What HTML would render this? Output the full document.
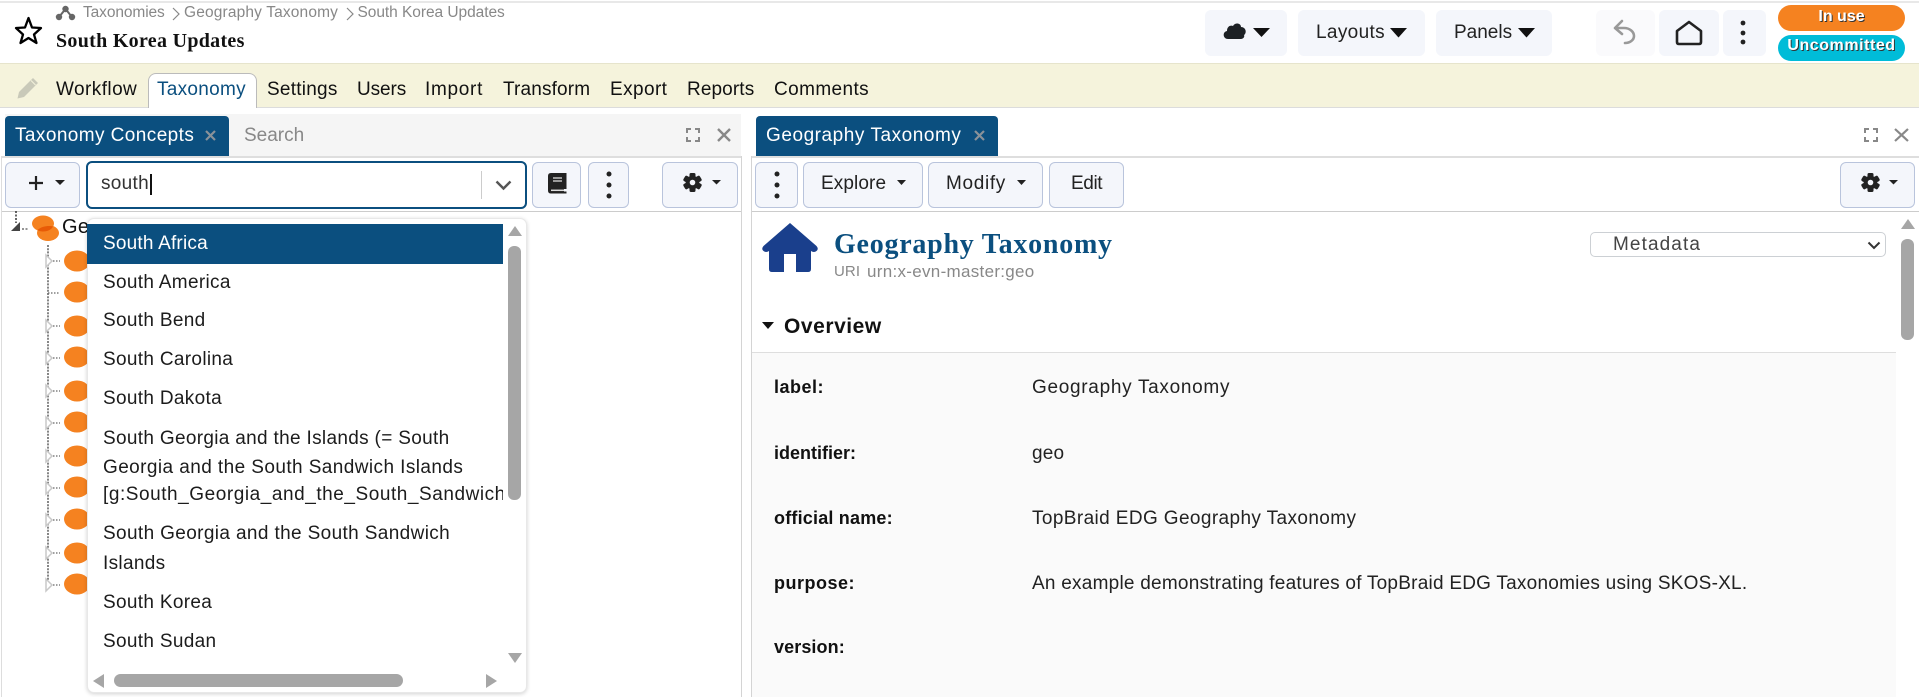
<!DOCTYPE html>
<html lang="en">
<head>
<meta charset="utf-8">
<title>South Korea Updates</title>
<style>
html,body{margin:0;padding:0;background:#fff;}
body{width:1919px;height:697px;overflow:hidden;position:relative;font-family:"Liberation Sans",sans-serif;color:#111;}
.a{position:absolute;box-sizing:border-box;}
.t{position:absolute;white-space:nowrap;line-height:24px;height:24px;font-size:19px;letter-spacing:.2px;margin-top:1px;}
.n{margin-top:0;}
.btn{position:absolute;box-sizing:border-box;background:#f4f6fb;border:1px solid #b9c4dc;border-radius:6px;}
.hb{position:absolute;background:#f4f6fb;border-radius:6px;}
.b{font-weight:bold;font-size:18px;color:#111;margin-top:0;}
.dd{font-size:19px;letter-spacing:.32px;color:#1c1c1c;}
svg{position:absolute;overflow:visible;}
</style>
</head>
<body>
<!-- header -->
<div class="a" style="left:0;top:1px;width:1919px;height:2px;background:#e8e8e8"></div>
<svg style="left:0;top:0" width="80" height="60"><path d="M28.5 18 L32 27.5 L41 28 L34 34.5 L36.5 43 L28.5 38 L20.5 43 L23 34.5 L16 28 L25 27.5 Z" fill="none" stroke="#000" stroke-width="2.3" stroke-linejoin="round"/><g fill="#666"><circle cx="65.5" cy="9" r="3.2"/><circle cx="59" cy="17" r="3.2"/><circle cx="72" cy="17" r="3.2"/><path d="M65.5 9 L59 17 M65.5 9 L72 17" stroke="#666" stroke-width="2"/></g></svg>
<div class="t n" style="left:83px;top:1px;font-size:15.5px;letter-spacing:-.1px;color:#888">Taxonomies</div>
<svg style="left:171px;top:7px" width="10" height="14"><path d="M2 1 L8 7 L2 13" fill="none" stroke="#888" stroke-width="1.2"/></svg>
<div class="t n" style="left:184px;top:1px;font-size:15.5px;letter-spacing:.15px;color:#888">Geography Taxonomy</div>
<svg style="left:346px;top:7px" width="10" height="14"><path d="M1 1 L7 7 L1 13" fill="none" stroke="#888" stroke-width="1.2"/></svg>
<div class="t n" style="left:357.5px;top:1px;font-size:15.5px;letter-spacing:-.05px;color:#888">South Korea Updates</div>
<div class="t n" style="left:56px;top:29px;font-family:'Liberation Serif',serif;font-weight:bold;font-size:20px;letter-spacing:.3px;color:#111">South Korea Updates</div>

<div class="hb" style="left:1205px;top:10px;width:82px;height:46px"></div>
<svg style="left:1222px;top:22px" width="50" height="18"><path d="M6 17 C1 17 0 10 5 9 C5 4 9 3 11 4 C13 0 19 1 19 5 C24 5 25 11 22 13 C23 15 21 17 19 17 Z" fill="#1c2024"/><path d="M31 6 H48 L39.5 15 Z" fill="#111"/></svg>
<div class="hb" style="left:1298px;top:10px;width:127px;height:46px"></div>
<div class="t" style="left:1316px;top:20px;letter-spacing:.35px;color:#222">Layouts</div>
<svg style="left:1390px;top:28px" width="17" height="10"><path d="M0 0 H17 L8.5 9.5 Z" fill="#111"/></svg>
<div class="hb" style="left:1436px;top:10px;width:116px;height:46px"></div>
<div class="t" style="left:1454px;top:20px;letter-spacing:0;color:#222">Panels</div>
<svg style="left:1518px;top:28px" width="17" height="10"><path d="M0 0 H17 L8.5 9.5 Z" fill="#111"/></svg>

<div class="hb" style="left:1596px;top:10px;width:59px;height:46px;background:#fafafc"></div>
<svg style="left:1612px;top:18px" width="26" height="28"><path d="M10 3 L3 10 L10 16 M3 10 H12 C18 10 22 14 22 18 C22 22 18 25 13 25" fill="none" stroke="#999" stroke-width="2.6" stroke-linecap="round" stroke-linejoin="round"/></svg>
<div class="hb" style="left:1659px;top:10px;width:60px;height:46px"></div>
<svg style="left:1674px;top:19px" width="30" height="27"><path d="M3 12 L15 3 L27 12 V23 Q27 25 25 25 H5 Q3 25 3 23 Z" fill="none" stroke="#222" stroke-width="2.6" stroke-linejoin="round"/></svg>
<div class="hb" style="left:1723px;top:10px;width:43px;height:46px"></div>
<svg style="left:1738px;top:18px" width="10" height="30"><circle cx="5" cy="5" r="2.4" fill="#222"/><circle cx="5" cy="15" r="2.4" fill="#222"/><circle cx="5" cy="24" r="2.4" fill="#222"/></svg>

<div class="a" style="left:1778px;top:5px;width:127px;height:26px;border-radius:13px;background:#f58220"></div>
<div class="t n" style="left:1778px;width:127px;top:5px;text-align:center;font-weight:bold;font-size:16px;letter-spacing:0;color:#fff;text-shadow:1px 1px 0 #333">In use</div>
<div class="a" style="left:1778px;top:35px;width:127px;height:26px;border-radius:13px;background:#00bcd8"></div>
<div class="t n" style="left:1778px;width:127px;top:34px;text-align:center;font-weight:bold;font-size:16px;letter-spacing:.55px;color:#fff;text-shadow:1px 1px 0 #333">Uncommitted</div>

<!-- menu bar -->
<div class="a" style="left:0;top:63px;width:1919px;height:45px;background:#f5f3dc;border-top:1px solid #e6e4cc;border-bottom:1px solid #dcdcdc"></div>
<svg style="left:16px;top:76px" width="24" height="24"><path d="M17 2 L22 7 L8 21 L1.500 22.500 L3 16 Z" fill="#c9c9b9"/><path d="M15 4.500 L19.500 9" stroke="#f5f3dc" stroke-width="1"/></svg>
<div class="a" style="left:148px;top:73px;width:109px;height:35px;background:#fff;border:1px solid #bbb;border-bottom:none;border-radius:8px 8px 0 0"></div>
<div class="t" style="left:56px;top:77px;letter-spacing:.43px">Workflow</div>
<div class="t" style="left:157px;top:77px;letter-spacing:.29px;color:#0b4f7f">Taxonomy</div>
<div class="t" style="left:267px;top:77px;letter-spacing:.24px">Settings</div>
<div class="t" style="left:357px;top:77px;letter-spacing:-.1px">Users</div>
<div class="t" style="left:425px;top:77px;letter-spacing:.7px">Import</div>
<div class="t" style="left:503px;top:77px;letter-spacing:.15px">Transform</div>
<div class="t" style="left:610px;top:77px;letter-spacing:.41px">Export</div>
<div class="t" style="left:687px;top:77px;letter-spacing:.11px">Reports</div>
<div class="t" style="left:774px;top:77px;letter-spacing:.4px">Comments</div>

<!-- left panel -->
<div class="a" style="left:5px;top:114px;width:736px;height:42px;background:#f5f5f5"></div>
<div class="a" style="left:5px;top:116px;width:224px;height:40px;background:#0b4f7f;border-radius:4px 4px 0 0"></div>
<div class="t" style="left:15px;top:123px;letter-spacing:.42px;color:#fff">Taxonomy Concepts</div>
<svg style="left:204px;top:129px" width="13" height="13"><path d="M2 2 L11 11 M11 2 L2 11" stroke="#8a9299" stroke-width="2.2"/></svg>
<div class="t" style="left:244px;top:123px;letter-spacing:0;color:#888">Search</div>
<svg style="left:686px;top:128px" width="14" height="14"><path d="M1 5 V1 H5 M9 1 H13 V5 M13 9 V13 H9 M5 13 H1 V9" fill="none" stroke="#888" stroke-width="2"/></svg>
<svg style="left:717px;top:128px" width="14" height="14"><path d="M1 1 L13 13 M13 1 L1 13" stroke="#888" stroke-width="2.4"/></svg>
<div class="a" style="left:1px;top:156px;width:741px;height:2px;background:#dedede"></div>
<div class="a" style="left:1px;top:211px;width:741px;height:1px;background:#ccc"></div>
<div class="a" style="left:1px;top:156px;width:1px;height:541px;background:#ddd"></div>
<div class="a" style="left:741px;top:156px;width:1px;height:541px;background:#d4d4d4"></div>

<div class="btn" style="left:5px;top:162px;width:75px;height:46px"></div>
<svg style="left:28px;top:175px" width="38" height="16"><path d="M8 1 V15 M1 8 H15" stroke="#222" stroke-width="2.2"/><path d="M27 5 H37 L32 10 Z" fill="#222"/></svg>
<div class="a" style="left:86px;top:161px;width:441px;height:48px;background:#fff;border:2px solid #0b4f7f;border-radius:6px"></div>
<div class="t" style="left:101px;top:171px;letter-spacing:.3px;color:#333">south</div>
<div class="a" style="left:150px;top:174px;width:1.5px;height:21px;background:#111"></div>
<div class="a" style="left:481px;top:171px;width:1px;height:28px;background:#ccc"></div>
<svg style="left:495px;top:180px" width="17" height="11"><path d="M1.5 1.5 L8.5 8.5 L15.5 1.5" fill="none" stroke="#555" stroke-width="2.4"/></svg>
<div class="btn" style="left:532px;top:162px;width:49px;height:46px"></div>
<svg style="left:548px;top:173px" width="19" height="21"><path d="M3 0 H18.500 V16 H16 V18.500 H18.500 V20.500 H3 Q0 20.500 0 17.500 V3 Q0 0 3 0 Z" fill="#222"/><path d="M5 5 H14 M5 8 H14" stroke="#e2e2e2" stroke-width="1.3"/><path d="M3 17.300 H16" stroke="#ddd" stroke-width="1.500"/></svg>
<div class="btn" style="left:588px;top:162px;width:41px;height:46px"></div>
<svg style="left:604px;top:169px" width="10" height="32"><circle cx="5" cy="5" r="2.5" fill="#222"/><circle cx="5" cy="16" r="2.5" fill="#222"/><circle cx="5" cy="27" r="2.5" fill="#222"/></svg>
<div class="btn" style="left:662px;top:162px;width:76px;height:46px"></div>
<svg style="left:683px;top:173px" width="40" height="20"><g transform="translate(9.5,9.5)"><g fill="#222"><rect x="-3" y="-9.5" width="6" height="19" rx="1.5"/><rect x="-3" y="-9.5" width="6" height="19" rx="1.5" transform="rotate(60)"/><rect x="-3" y="-9.5" width="6" height="19" rx="1.5" transform="rotate(120)"/><circle r="6.8"/></g><circle r="2.8" fill="#f4f6fb"/></g><path d="M29 7 H38 L33.5 11.5 Z" fill="#222"/></svg>

<!-- tree -->
<svg style="left:0;top:205px" width="100" height="400">
<path d="M16 6 V18" stroke="#333" stroke-width="1.5" stroke-dasharray="2 1.5"/>
<path d="M11 26 L20 17 V26 Z" fill="#444"/>
<path d="M22 24 H29" stroke="#555" stroke-width="1.3" stroke-dasharray="2 1.5"/>
<ellipse cx="43" cy="18.5" rx="11" ry="8" fill="#f58220"/>
<ellipse cx="48" cy="28" rx="11" ry="8" fill="#f58220"/>
<path d="M37.5 25 C42 21 49 20.5 53 21.5 C52 24 48 26.5 43 26.5 C41 26.5 38.5 26 37.5 25 Z" fill="#e85a06"/>
<path d="M48 40 V376" stroke="#444" stroke-width="1.3" stroke-dasharray="2 1.2"/>
<g fill="#f58220"><ellipse cx="77" cy="56" rx="13" ry="10.5"/><ellipse cx="77" cy="87" rx="13" ry="10.5"/><ellipse cx="77" cy="121" rx="13" ry="10.5"/><ellipse cx="77" cy="152" rx="13" ry="10.5"/><ellipse cx="77" cy="186" rx="13" ry="10.5"/><ellipse cx="77" cy="217" rx="13" ry="10.5"/><ellipse cx="77" cy="251" rx="13" ry="10.5"/><ellipse cx="77" cy="282" rx="13" ry="10.5"/><ellipse cx="77" cy="314" rx="13" ry="10.5"/><ellipse cx="77" cy="348" rx="13" ry="10.5"/><ellipse cx="77" cy="379" rx="13" ry="10.5"/></g>
<g fill="#fff" stroke="#c8c8c8" stroke-width="1.500"><path d="M46 50 L52 56 L46 62 Z"/><path d="M46 115 L52 121 L46 127 Z"/><path d="M46 147 L52 153 L46 159 Z"/><path d="M46 180 L52 186 L46 192 Z"/><path d="M46 212 L52 218 L46 224 Z"/><path d="M46 245 L52 251 L46 257 Z"/><path d="M46 277 L52 283 L46 289 Z"/><path d="M46 309 L52 315 L46 321 Z"/><path d="M46 342 L52 348 L46 354 Z"/><path d="M46 374 L52 380 L46 386 Z"/></g>
<g stroke="#666" stroke-width="1.2" stroke-dasharray="1.5 1.5"><path d="M53 56 H60M48 88 H60M53 121 H60M53 153 H60M53 186 H60M53 218 H60M53 251 H60M53 283 H60M53 315 H60M53 348 H60M53 380 H60"/></g>
</svg>
<div class="t n" style="left:62px;top:215px;font-size:20px;letter-spacing:.3px;color:#111">Ge</div>

<!-- dropdown -->
<div class="a" style="left:87px;top:218px;width:440px;height:475px;background:#fff;border-radius:7px;border:1px solid #e8e8e8;box-shadow:0 1px 4px rgba(0,0,0,.18)"></div>
<div class="a" style="left:87px;top:224px;width:416px;height:40px;background:#0b4f7f"></div>
<div class="a" style="left:87px;top:224px;width:416px;height:440px;overflow:hidden">
<div class="t dd" style="left:16px;top:7px;letter-spacing:.2px;color:#fff">South Africa</div>
<div class="t dd" style="left:16px;top:46px">South America</div>
<div class="t dd" style="left:16px;top:84px">South Bend</div>
<div class="t dd" style="left:16px;top:123px">South Carolina</div>
<div class="t dd" style="left:16px;top:162px">South Dakota</div>
<div class="t dd" style="left:16px;top:202px">South Georgia and the Islands (= South</div>
<div class="t dd" style="left:16px;top:231px;letter-spacing:.42px">Georgia and the South Sandwich Islands</div>
<div class="t dd" style="left:16px;top:258px;letter-spacing:.55px">[g:South_Georgia_and_the_South_Sandwich_Islands]</div>
<div class="t dd" style="left:16px;top:297px;letter-spacing:.37px">South Georgia and the South Sandwich</div>
<div class="t dd" style="left:16px;top:327px">Islands</div>
<div class="t dd" style="left:16px;top:366px">South Korea</div>
<div class="t dd" style="left:16px;top:405px">South Sudan</div>
</div>
<svg style="left:0;top:0" width="540" height="697">
<path d="M508 236 L515 226 L522 236 Z" fill="#a6a6a6"/>
<rect x="508" y="246" width="13" height="254" rx="6" fill="#a6a6a6"/>
<path d="M508 653 H522 L515 663 Z" fill="#a6a6a6"/>
<path d="M104 674 V688 L93 681 Z" fill="#a6a6a6"/>
<rect x="114" y="674" width="289" height="13" rx="6.5" fill="#a6a6a6"/>
<path d="M486 674 V688 L497 681 Z" fill="#a6a6a6"/>
</svg>

<!-- right panel -->
<div class="a" style="left:756px;top:116px;width:242px;height:40px;background:#0b4f7f;border-radius:4px 4px 0 0"></div>
<div class="t" style="left:766px;top:123px;letter-spacing:.55px;color:#fff">Geography Taxonomy</div>
<svg style="left:973px;top:129px" width="13" height="13"><path d="M2 2 L11 11 M11 2 L2 11" stroke="#8a9299" stroke-width="2.2"/></svg>
<svg style="left:1864px;top:128px" width="14" height="14"><path d="M1 5 V1 H5 M9 1 H13 V5 M13 9 V13 H9 M5 13 H1 V9" fill="none" stroke="#888" stroke-width="2"/></svg>
<svg style="left:1894px;top:128px" width="15" height="14"><path d="M1 1 L14 13 M14 1 L1 13" stroke="#888" stroke-width="2.2"/></svg>
<div class="a" style="left:751px;top:156px;width:1168px;height:2px;background:#dedede"></div>
<div class="a" style="left:751px;top:211px;width:1168px;height:1px;background:#ccc"></div>
<div class="a" style="left:751px;top:156px;width:1px;height:541px;background:#d4d4d4"></div>

<div class="btn" style="left:755px;top:162px;width:43px;height:46px"></div>
<svg style="left:772px;top:169px" width="10" height="32"><circle cx="5" cy="5" r="2.5" fill="#222"/><circle cx="5" cy="16" r="2.5" fill="#222"/><circle cx="5" cy="27" r="2.5" fill="#222"/></svg>
<div class="btn" style="left:803px;top:162px;width:120px;height:46px"></div>
<div class="t" style="left:821px;top:171px;letter-spacing:.1px;color:#222">Explore</div>
<svg style="left:897px;top:180px" width="10" height="6"><path d="M0 0 H9 L4.5 5 Z" fill="#222"/></svg>
<div class="btn" style="left:928px;top:162px;width:115px;height:46px"></div>
<div class="t" style="left:946px;top:171px;letter-spacing:.67px;color:#222">Modify</div>
<svg style="left:1017px;top:180px" width="10" height="6"><path d="M0 0 H9 L4.5 5 Z" fill="#222"/></svg>
<div class="btn" style="left:1049px;top:162px;width:75px;height:46px"></div>
<div class="t" style="left:1071px;top:171px;letter-spacing:-.4px;color:#222">Edit</div>
<div class="btn" style="left:1840px;top:162px;width:75px;height:46px"></div>
<svg style="left:1861px;top:173px" width="40" height="20"><g transform="translate(9.5,9.5)"><g fill="#222"><rect x="-3" y="-9.5" width="6" height="19" rx="1.5"/><rect x="-3" y="-9.5" width="6" height="19" rx="1.5" transform="rotate(60)"/><rect x="-3" y="-9.5" width="6" height="19" rx="1.5" transform="rotate(120)"/><circle r="6.8"/></g><circle r="2.8" fill="#f4f6fb"/></g><path d="M28 7 H37 L32.5 11.5 Z" fill="#222"/></svg>

<svg style="left:762px;top:223px" width="56" height="49"><path d="M28 0 L54.5 23 Q57 26 54.5 28 Q52 30 49 28 V46 Q49 49 46 49 H34 V31 H22 V49 H10 Q7 49 7 46 V28 Q4 30 1.500 28 Q-1 26 1.500 23 Z" fill="#1a3f8c"/></svg>
<div class="t n" style="left:834px;top:230px;height:30px;line-height:30px;font-family:'Liberation Serif',serif;font-weight:bold;font-size:28px;letter-spacing:.75px;color:#0b4f7f">Geography Taxonomy</div>
<div class="t n" style="left:834px;top:260px;font-size:15px;letter-spacing:.1px;color:#888">URI</div>
<div class="t n" style="left:867px;top:260px;font-size:17px;letter-spacing:.3px;color:#888">urn:x-evn-master:geo</div>
<div class="a" style="left:1590px;top:232px;width:296px;height:25px;background:#fff;border:1px solid #ccd0d4;border-radius:5px"></div>
<div class="t" style="left:1613px;top:232px;letter-spacing:1.1px;color:#444">Metadata</div>
<svg style="left:1867px;top:241px" width="14" height="9"><path d="M1.5 1.5 L7 7 L12.500 1.500" fill="none" stroke="#333" stroke-width="2"/></svg>

<svg style="left:1900px;top:216px" width="18" height="130"><path d="M1 13 L8 3 L15 13 Z" fill="#a6a6a6"/><rect x="1" y="23" width="13" height="101" rx="6" fill="#a6a6a6"/></svg>

<svg style="left:762px;top:322px" width="13" height="8"><path d="M0 0 H12 L6 7 Z" fill="#111"/></svg>
<div class="t n" style="left:784px;top:315px;font-size:21px;font-weight:bold;letter-spacing:.55px;color:#111">Overview</div>
<div class="a" style="left:752px;top:352px;width:1144px;height:345px;background:#fafafa;border-top:1px solid #dedede"></div>

<div class="t b" style="left:774px;top:375px;letter-spacing:.5px">label:</div>
<div class="t b" style="left:774px;top:441px;letter-spacing:0">identifier:</div>
<div class="t b" style="left:774px;top:506px;letter-spacing:.2px">official name:</div>
<div class="t b" style="left:774px;top:571px;letter-spacing:.5px">purpose:</div>
<div class="t b" style="left:774px;top:635px;letter-spacing:.1px">version:</div>
<div class="t" style="left:1032px;top:375px;letter-spacing:.7px;color:#222">Geography Taxonomy</div>
<div class="t" style="left:1032px;top:441px;letter-spacing:.2px;color:#222">geo</div>
<div class="t" style="left:1032px;top:506px;letter-spacing:.39px;color:#222">TopBraid EDG Geography Taxonomy</div>
<div class="t" style="left:1032px;top:571px;letter-spacing:.24px;color:#222">An example demonstrating features of TopBraid EDG Taxonomies using SKOS-XL.</div>
</body>
</html>
